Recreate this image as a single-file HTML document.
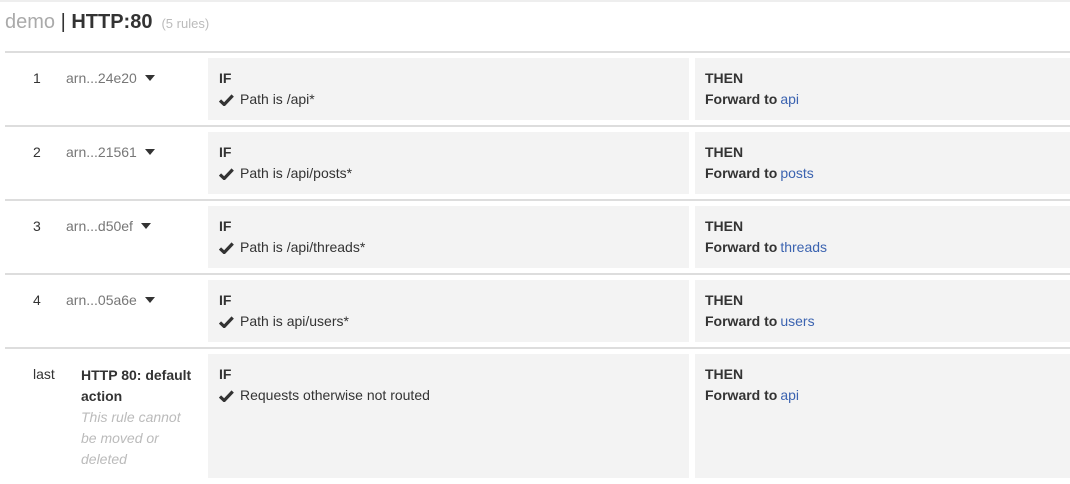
<!DOCTYPE html>
<html><head><meta charset="utf-8"><style>
body{margin:0;width:1070px;height:484px;background:#fff;font-family:"Liberation Sans",Arial,sans-serif;color:#333;position:relative;overflow:hidden}
.top{position:absolute;left:0;top:0;width:1070px;height:2px;background:#eee}
.title{position:absolute;left:5px;top:11px;font-size:20px;white-space:nowrap}
.title .d{color:#aaa}
.title b{color:#333;font-weight:bold}
.title small{font-size:13px;color:#bbb;margin-left:9px}
.line{position:absolute;left:5px;width:1065px;height:2px;background:#ddd}
.box{position:absolute;background:#f3f3f3}
.t{position:absolute;font-size:14px;white-space:nowrap}
.b{font-weight:bold}
.g{color:#777}
.a{color:#3b63b0;margin-left:3px}
.tri{display:inline-block;width:0;height:0;border-left:5px solid transparent;border-right:5px solid transparent;border-top:6px solid #333;margin-left:8px;vertical-align:2px}
.ck{display:inline-block;margin-right:6px;vertical-align:-2px}
.it{font-style:italic;color:#bbb}
</style></head><body>
<div class="top"></div>
<div class="title"><span class="d">demo</span> | <b>HTTP:80</b><small>(5 rules)</small></div>

<div class="line" style="top:51px"></div>
<div class="line" style="top:125px"></div>
<div class="line" style="top:199px"></div>
<div class="line" style="top:273px"></div>
<div class="line" style="top:347px"></div>

<div class="box" style="left:208px;top:58px;width:481px;height:62px"></div>
<div class="box" style="left:695px;top:58px;width:375px;height:62px"></div>
<div class="box" style="left:208px;top:132px;width:481px;height:62px"></div>
<div class="box" style="left:695px;top:132px;width:375px;height:62px"></div>
<div class="box" style="left:208px;top:206px;width:481px;height:62px"></div>
<div class="box" style="left:695px;top:206px;width:375px;height:62px"></div>
<div class="box" style="left:208px;top:280px;width:481px;height:62px"></div>
<div class="box" style="left:695px;top:280px;width:375px;height:62px"></div>
<div class="box" style="left:208px;top:354px;width:481px;height:124px"></div>
<div class="box" style="left:695px;top:354px;width:375px;height:124px"></div>

<div class="t" style="left:33px;top:70px">1</div>
<div class="t g" style="left:66px;top:70px">arn...24e20<span class="tri"></span></div>
<div class="t" style="left:33px;top:144px">2</div>
<div class="t g" style="left:66px;top:144px">arn...21561<span class="tri"></span></div>
<div class="t" style="left:33px;top:218px">3</div>
<div class="t g" style="left:66px;top:218px">arn...d50ef<span class="tri"></span></div>
<div class="t" style="left:33px;top:292px">4</div>
<div class="t g" style="left:66px;top:292px">arn...05a6e<span class="tri"></span></div>
<div class="t" style="left:33px;top:366px">last</div>
<div class="t b" style="left:81px;top:365px;line-height:21px">HTTP 80: default<br>action</div>
<div class="t it" style="left:81px;top:407px;line-height:21px">This rule cannot<br>be moved or<br>deleted</div>

<div class="t b" style="left:219px;top:70px">IF</div>
<div class="t" style="left:219px;top:91px"><svg class="ck" width="15" height="12" viewBox="0 0 15 12"><path d="M1 6.5l4.2 4 8.5-9" stroke="#333" stroke-width="3.2" fill="none"/></svg>Path is /api*</div>
<div class="t b" style="left:219px;top:144px">IF</div>
<div class="t" style="left:219px;top:165px"><svg class="ck" width="15" height="12" viewBox="0 0 15 12"><path d="M1 6.5l4.2 4 8.5-9" stroke="#333" stroke-width="3.2" fill="none"/></svg>Path is /api/posts*</div>
<div class="t b" style="left:219px;top:218px">IF</div>
<div class="t" style="left:219px;top:239px"><svg class="ck" width="15" height="12" viewBox="0 0 15 12"><path d="M1 6.5l4.2 4 8.5-9" stroke="#333" stroke-width="3.2" fill="none"/></svg>Path is /api/threads*</div>
<div class="t b" style="left:219px;top:292px">IF</div>
<div class="t" style="left:219px;top:313px"><svg class="ck" width="15" height="12" viewBox="0 0 15 12"><path d="M1 6.5l4.2 4 8.5-9" stroke="#333" stroke-width="3.2" fill="none"/></svg>Path is api/users*</div>
<div class="t b" style="left:219px;top:366px">IF</div>
<div class="t" style="left:219px;top:387px"><svg class="ck" width="15" height="12" viewBox="0 0 15 12"><path d="M1 6.5l4.2 4 8.5-9" stroke="#333" stroke-width="3.2" fill="none"/></svg>Requests otherwise not routed</div>

<div class="t b" style="left:705px;top:70px">THEN</div>
<div class="t" style="left:705px;top:91px"><b>Forward to</b><span class="a">api</span></div>
<div class="t b" style="left:705px;top:144px">THEN</div>
<div class="t" style="left:705px;top:165px"><b>Forward to</b><span class="a">posts</span></div>
<div class="t b" style="left:705px;top:218px">THEN</div>
<div class="t" style="left:705px;top:239px"><b>Forward to</b><span class="a">threads</span></div>
<div class="t b" style="left:705px;top:292px">THEN</div>
<div class="t" style="left:705px;top:313px"><b>Forward to</b><span class="a">users</span></div>
<div class="t b" style="left:705px;top:366px">THEN</div>
<div class="t" style="left:705px;top:387px"><b>Forward to</b><span class="a">api</span></div>
</body></html>
